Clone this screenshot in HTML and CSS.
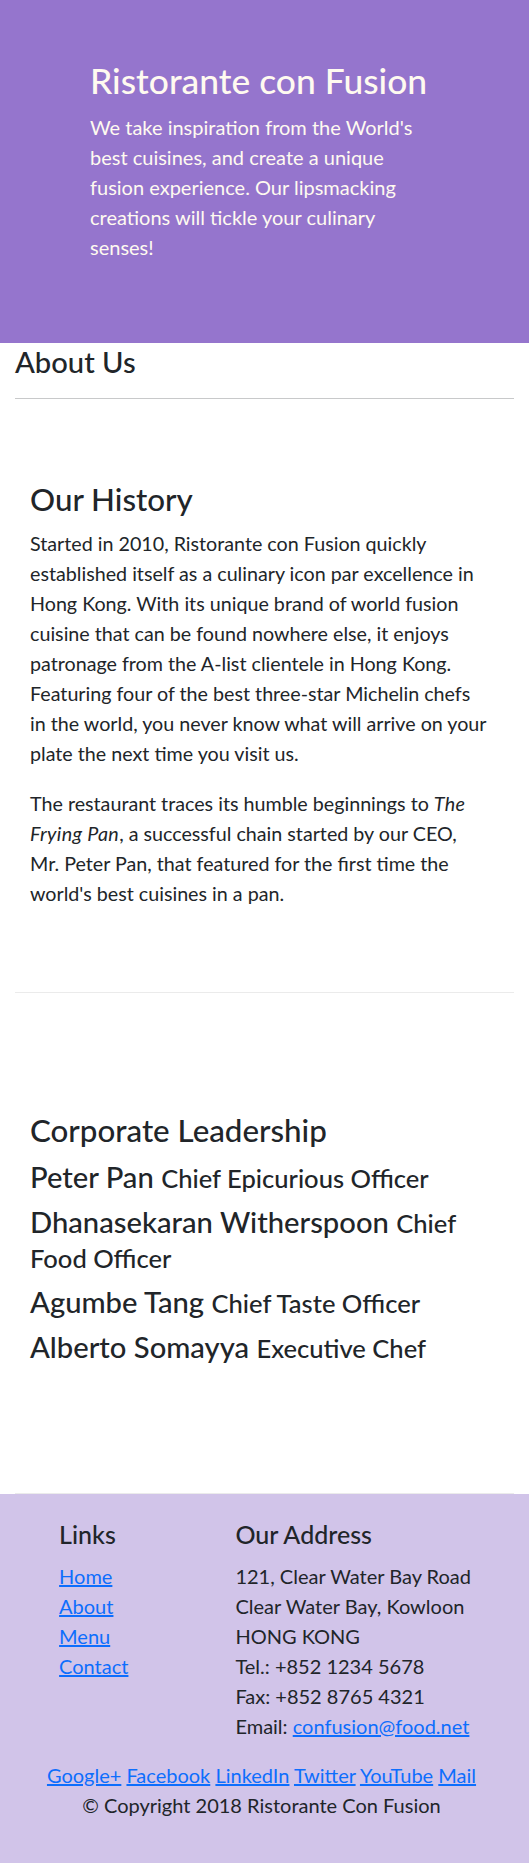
FILE: index.html
```
<!DOCTYPE html>
<html lang="en">
<head>
<meta charset="utf-8">
<title>Ristorante con Fusion: About Us</title>
<link rel="stylesheet" href="styles.css">
</head>
<body>
<header class="hero">
  <div class="hero-col">
    <h1 class="hero-title">Ristorante con Fusion</h1>
    <p class="hero-text">We take inspiration from the World's best cuisines, and create a unique fusion experience. Our lipsmacking creations will tickle your culinary senses!</p>
  </div>
</header>

<main class="main">
  <div class="about-head">
    <h3 class="h3">About Us</h3>
    <hr class="rule">
  </div>

  <section class="section">
    <h2 class="h2">Our History</h2>
    <p class="text">Started in 2010, Ristorante con Fusion quickly established itself as a culinary icon par excellence in Hong Kong. With its unique brand of world fusion cuisine that can be found nowhere else, it enjoys patronage from the A-list clientele in Hong Kong.  Featuring four of the best three-star Michelin chefs in the world, you never know what will arrive on your plate the next time you visit us.</p>
    <p class="text">The restaurant traces its humble beginnings to <em class="name">The Frying Pan</em>, a successful chain started by our CEO, Mr. Peter Pan, that featured for the first time the world's best cuisines in a pan.</p>
  </section>

  <section class="section section-leaders">
    <h2 class="h2">Corporate Leadership</h2>
    <ul class="leaders">
      <li><h3 class="h3">Peter Pan <small class="role">Chief Epicurious Officer</small></h3></li>
      <li><h3 class="h3">Dhanasekaran Witherspoon <small class="role">Chief Food Officer</small></h3></li>
      <li><h3 class="h3">Agumbe Tang <small class="role">Chief Taste Officer</small></h3></li>
      <li><h3 class="h3">Alberto Somayya <small class="role">Executive Chef</small></h3></li>
    </ul>
  </section>
</main>

<footer class="footer">
  <div class="footer-row">
    <div class="f-links">
      <h5 class="h5">Links</h5>
      <ul class="plain-list">
        <li><a class="link" href="#">Home</a></li>
        <li><a class="link" href="#">About</a></li>
        <li><a class="link" href="#">Menu</a></li>
        <li><a class="link" href="#">Contact</a></li>
      </ul>
    </div>
    <div class="f-addr">
      <h5 class="h5">Our Address</h5>
      <address class="address">
        121, Clear Water Bay Road<br>
        Clear Water Bay, Kowloon<br>
        HONG KONG<br>
        Tel.: +852 1234 5678<br>
        Fax: +852 8765 4321<br>
        Email: <a class="link" href="#">confusion@food.net</a>
      </address>
    </div>
  </div>
  <div class="footer-bottom">
    <div class="social">
      <a class="link" href="#">Google+</a>
      <a class="link" href="#">Facebook</a>
      <a class="link" href="#">LinkedIn</a>
      <a class="link" href="#">Twitter</a>
      <a class="link" href="#">YouTube</a>
      <a class="link" href="#">Mail</a>
    </div>
    <p class="copyright">© Copyright 2018 Ristorante Con Fusion</p>
  </div>
</footer>
</body>
</html>
```
FILE: styles.css
```
html, body {
  margin: 0;
  padding: 0;
}

body {
  font-family: Lato, "Open Sans", sans-serif;
  font-size: 20px;
  line-height: 1.5;
  color: #212529;
  background: #ffffff;
}

*, *::before, *::after {
  box-sizing: border-box;
}

.h2, .h3, .h5, .hero-title {
  margin: 0 0 10px;
  font-weight: 500;
  line-height: 1.2;
}

.hero-title { font-size: 35.4px; }
.h2 { font-size: 31.3px; }
.h3 { font-size: 29.2px; }
.h5 { font-size: 25px; }

.role { font-size: 0.875em; }

.text, .hero-text {
  margin: 0 0 20px;
}

.text {
  font-size: 19.7px;
  line-height: 30px;
  max-width: 460.3px;
}

.name {
  letter-spacing: 0.35px;
}

.link {
  color: #0d6efd;
  text-decoration: underline;
}

/* Hero */
.hero {
  background: #9575CD;
  color: #FFFAF0;
  padding: 60px 0 60.5px 90px;
}

.hero-col {
  max-width: 340px;
}

/* Main */
.main {
  padding: 0 15px;
}

.about-head {
  padding-top: 1px;
}

.rule {
  margin: 19px 0 20px;
  height: 0;
  border: 0;
  border-top: 1px solid #c8c9ca;
}

.section {
  padding: 62px 15px 63px;
  border-bottom: 1px solid #ebebeb;
}

.section-leaders {
  padding-top: 119px;
  min-height: 501px;
}

.leaders {
  list-style: none;
  margin: 0 0 20px;
  padding: 0;
}

/* Footer */
.footer {
  background: #D1C4E9;
  padding: 25px 0 25px;
}

.footer-row {
  display: flex;
}

.f-links {
  margin-left: 8.3333%;
  width: 33.3333%;
  padding: 0 15px;
}

.f-addr {
  width: 58.3333%;
  padding: 0 15px;
}

.footer .h5 {
  margin-bottom: 12px;
}

.plain-list {
  list-style: none;
  margin: 0 0 19px;
  padding: 0;
}

.address {
  margin: 0 0 19px;
  font-style: normal;
}

.footer-bottom {
  padding: 0 21px 0 15px;
  text-align: center;
}

.social {
  margin: 0;
}

.copyright {
  margin: 0 0 20px;
}
```
